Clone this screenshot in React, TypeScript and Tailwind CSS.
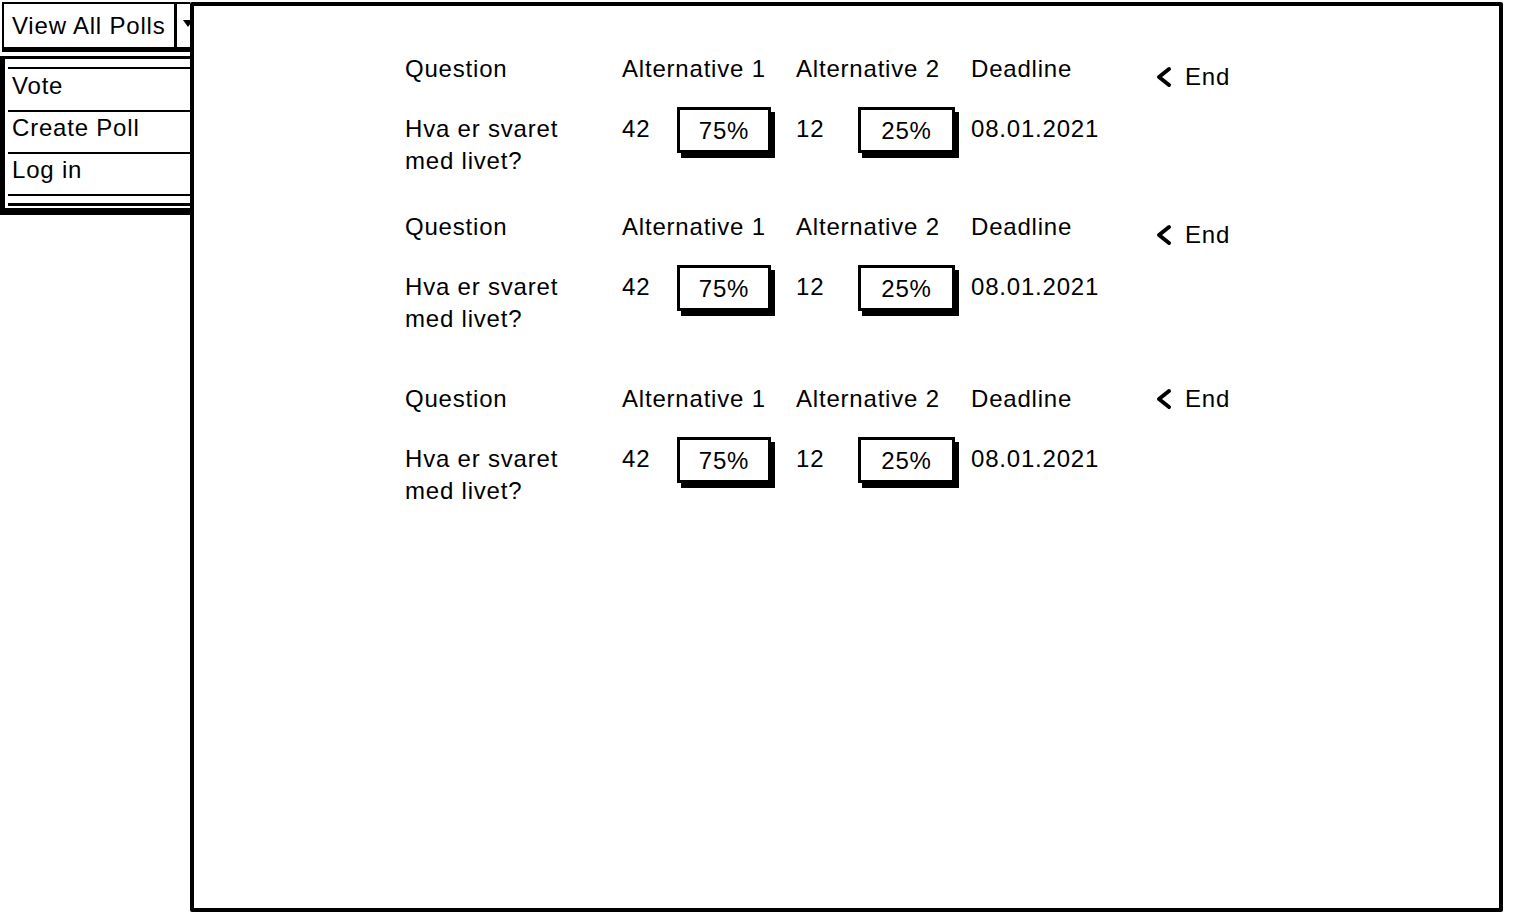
import React from 'react'

interface Poll {
  id: number
  question: string[]
  votes1: number
  pct1: string
  votes2: number
  pct2: string
  deadline: string
  endOffset: string
}

const polls: Poll[] = [
  { id: 1, question: ['Hva er svaret', 'med livet?'], votes1: 42, pct1: '75%', votes2: 12, pct2: '25%', deadline: '08.01.2021', endOffset: 'mt-[8px]' },
  { id: 2, question: ['Hva er svaret', 'med livet?'], votes1: 42, pct1: '75%', votes2: 12, pct2: '25%', deadline: '08.01.2021', endOffset: 'mt-[8px]' },
  { id: 3, question: ['Hva er svaret', 'med livet?'], votes1: 42, pct1: '75%', votes2: 12, pct2: '25%', deadline: '08.01.2021', endOffset: 'mt-0' },
]

// gap above each poll block, taken from the mockup
const blockGaps = ['mt-0', 'mt-[34px]', 'mt-[48px]']

const ChevronLeft = () => (
  <svg width="17" height="24" viewBox="0 0 17 24" className="shrink-0">
    <path d="M14 4 L4 12 L14 20" fill="none" stroke="#000" strokeWidth="4" strokeLinecap="round" strokeLinejoin="round" />
  </svg>
)

const PctBox = ({ value, width }: { value: string; width: string }) => (
  <div className={`${width} h-[46px] border-[3px] border-black bg-white shadow-[4px_5px_0_0_#000] flex items-center justify-center`}>
    <span className="pt-[2px]">{value}</span>
  </div>
)

const Sidebar = () => (
  <div className="w-[190px] shrink-0 relative z-10">
    <div className="mt-[2px] ml-[2px] h-[50px] border-2 border-r-0 border-b-[5px] border-black flex">
      <div className="w-[173px] border-r-[3px] border-black flex items-center pl-[8px]">View All Polls</div>
      <div className="flex-1 flex justify-end pt-[16px]">
        <div className="w-0 h-0 border-l-[5px] border-r-[5px] border-t-[7px] border-l-transparent border-r-transparent border-t-black mr-[-3px]" />
      </div>
    </div>
    <div className="mt-[4px] w-[192px] h-[159px] border-l-[5px] border-t-[3px] border-b-[7px] border-black flex flex-col">
      <div className="h-[8px]" />
      <div className="h-[2px] bg-black ml-[3px]" />
      <div className="h-[41px] pl-[7px] pt-[1px]">Vote</div>
      <div className="h-[2px] bg-black ml-[3px]" />
      <div className="h-[40px] pl-[7px]">Create Poll</div>
      <div className="h-[2px] bg-black ml-[3px]" />
      <div className="h-[40px] pl-[7px]">Log in</div>
      <div className="h-[2px] bg-black ml-[3px]" />
      <div className="h-[7px]" />
      <div className="h-[3px] bg-black ml-[3px]" />
    </div>
  </div>
)

const PollBlock = ({ poll, gap }: { poll: Poll; gap: string }) => (
  <div className={gap}>
    <div className="grid grid-cols-[217px_174px_175px_184px_auto] h-[32px]">
      <div>Question</div>
      <div>Alternative 1</div>
      <div>Alternative 2</div>
      <div>Deadline</div>
      <div className={`flex items-center gap-[13px] h-[32px] ${poll.endOffset}`}>
        <ChevronLeft />
        <span>End</span>
      </div>
    </div>
    <div className="grid grid-cols-[217px_174px_175px_184px_auto] mt-[22px]">
      <div className="pt-[6px]">
        {poll.question[0]}
        <br />
        {poll.question[1]}
      </div>
      <div className="flex items-start">
        <span className="w-[55px] pt-[6px]">{poll.votes1}</span>
        <PctBox value={poll.pct1} width="w-[94px]" />
      </div>
      <div className="flex items-start">
        <span className="w-[62px] pt-[6px]">{poll.votes2}</span>
        <PctBox value={poll.pct2} width="w-[97px]" />
      </div>
      <div className="pt-[6px]">{poll.deadline}</div>
      <div />
    </div>
  </div>
)

export default function App() {
  return (
    <div className="w-[1520px] h-[914px] bg-white text-black flex text-[24px] leading-[32px] tracking-[0.8px]" style={{ fontFamily: '"Liberation Sans", Arial, sans-serif' }}>
      <Sidebar />
      <div className="mt-[2px] w-[1313px] h-[910px] border-4 border-black rounded-[2px] pl-[211px] pt-[47px]">
        {polls.map((poll, i) => (
          <PollBlock key={poll.id} poll={poll} gap={blockGaps[i]} />
        ))}
      </div>
    </div>
  )
}
